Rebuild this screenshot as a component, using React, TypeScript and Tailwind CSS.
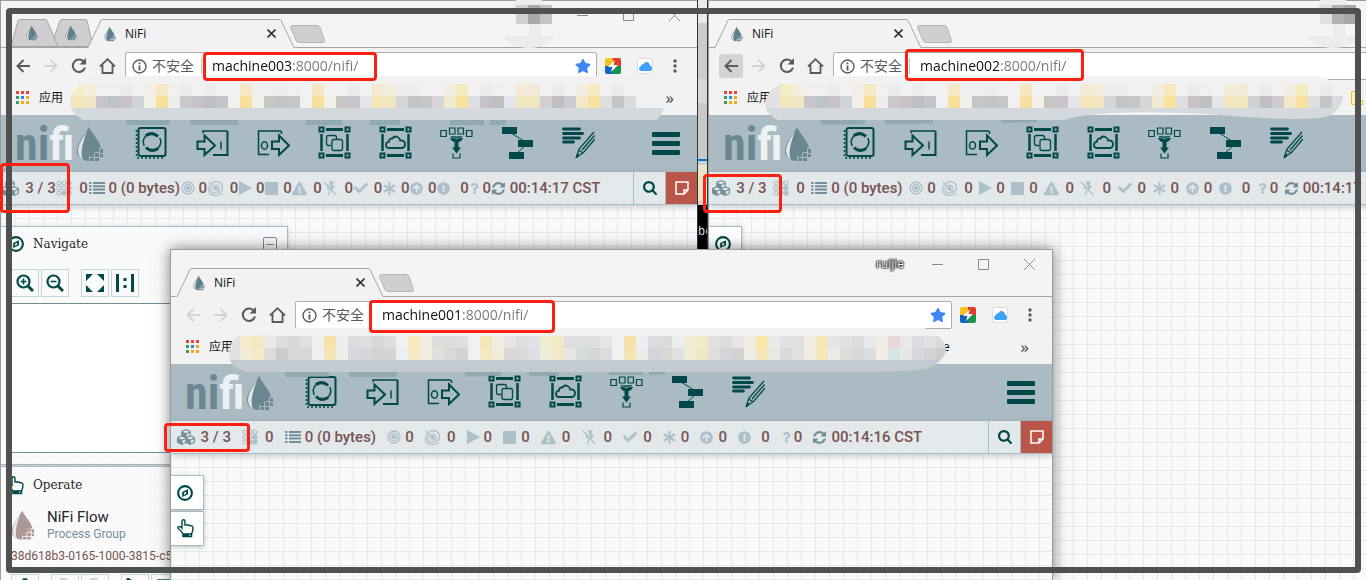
import type { ReactNode } from "react";
import {
  FaArrowCircleUp,
  FaAsterisk,
  FaBolt,
  FaCheck,
  FaCog,
  FaCubes,
  FaExclamationCircle,
  FaExclamationTriangle,
  FaPlay,
  FaQuestion,
  FaStar,
  FaStop,
} from "react-icons/fa";

const SEARCH_PATH =
  "M1216 832q0-185-131.5-316.5t-316.5-131.5-316.5 131.5-131.5 316.5 131.5 316.5 316.5 131.5 316.5-131.5 131.5-316.5zm512 832q0 52-38 90t-90 38q-54 0-90-38l-343-342q-179 124-399 124-143 0-273.5-55.5t-225-150-150-225-55.5-273.5 55.5-273.5 150-225 225-150 273.5-55.5 273.5 55.5 225 150 150 225 55.5 273.5q0 220-124 399l343 343q37 37 37 90z";
const REFRESH_PATH =
  "M1639 1056q0 5-1 7-64 268-268 434.5t-478 166.5q-146 0-282.5-55t-243.5-157l-129 129q-19 19-45 19t-45-19-19-45v-448q0-26 19-45t45-19h448q26 0 45 19t19 45-19 45l-137 137q71 66 161 102t187 36q134 0 250-65t186-179q11-17 53-117 8-23 30-23h192q13 0 22.5 9.5t9.5 22.5zm25-800v448q0 26-19 45t-45 19h-448q-26 0-45-19t-19-45 19-45l138-138q-148-137-349-137-134 0-250 65t-186 179q-11 17-53 117-8 23-30 23h-199q-13 0-22.5-9.5t-9.5-22.5v-7q65-268 270-434.5t480-166.5q146 0 284 55.5t245 156.5l130-129q19-19 45-19t45 19 19 45z";

function Drop({ className }: { className: string }) {
  return (
    <svg viewBox="0 0 28 36" className={className} aria-hidden="true">
      <path
        d="M13 1C10 8 1 17 1 25c0 6 5 10 12 10v-5h3v-3h3v-5h6C24 15 16 8 13 1z"
        fill="currentColor"
      />
      <path d="M11 5C8 11 2 18 2 25c0 4 2 7 5 9C4 27 6 19 11 5z" fill="#fff" opacity="0.8" />
      <path
        d="M19 22h4v4h-4zM24 23h3v4h-3zM14 27h4v4h-4zM19 27h4v4h-4zM24 28h3v3h-3zM14 32h4v3h-4zM19 32h4v3h-4z"
        fill="currentColor"
      />
    </svg>
  );
}

function Compass() {
  return (
    <svg viewBox="0 0 16 16" className="size-4" fill="none" stroke="currentColor" aria-hidden="true">
      <circle cx="8" cy="8" r="6.900" strokeWidth="2.100" />
      <path d="M11 4.200v5L5.200 12V7z" fill="currentColor" stroke="none" />
      <path d="M7 7.800l2.200-1v2L7 9.800z" fill="#f9fafb" stroke="none" />
    </svg>
  );
}

function Hand() {
  return (
    <svg viewBox="0 0 17 19" className="h-[19px] w-[17px]" fill="none" stroke="currentColor" strokeWidth="1.400" aria-hidden="true">
      <path d="M6 15q-1-2.500-4-4.800Q0 8.500 1.500 7.800 3 7 5 9V2.500Q5 .8 6.500.8T8 2.500V6q1.500-.8 2.600.3 1.500-.7 2.500.5Q16 6.500 16 9q0 3-1.500 6" />
      <path d="M5.500 14.500h9.500V18H5.500z" fill="currentColor" strokeWidth="0.500" />
      <path d="M12 16.300h1.500" stroke="#f9fafb" strokeWidth="1" />
    </svg>
  );
}

function Frame() {
  return (
    <g>
      <path d="M1.500 1.500h4v4h-4zM27.500 1.500h4v4h-4zM1.500 27.500h4v4h-4zM27.500 27.500h4v4h-4z" fill="none" strokeWidth="2" />
      <path d="M8 3.500h17M8 29.500h17" strokeWidth="3" />
      <path d="M3.500 8v17M29.500 8v17" strokeWidth="2.500" />
    </g>
  );
}

const TOOLS: { name: string; art: ReactNode }[] = [
  {
    name: "Processor",
    art: (
      <g fill="none">
        <rect x="3.500" y="2" width="27" height="28" rx="2" strokeWidth="2" />
        <path d="M1.500 4v27" strokeDasharray="2 2" strokeWidth="1.500" />
        <path d="M2 32h28" strokeDasharray="2 2" strokeWidth="1.500" />
        <path d="M9.200 20A9 9 0 0 1 20 7.600M24.800 12A9 9 0 0 1 14 24.400" strokeWidth="1.500" />
        <path d="M11 9.500A9 9 0 0 1 23 10.500M23 22.500A9 9 0 0 1 11 21.500" strokeWidth="3" />
      </g>
    ),
  },
  {
    name: "Input port",
    art: (
      <g fill="none">
        <path d="M1.500 15.500h7v-6l10.500 10-10.500 9.500v-6h-7z" strokeWidth="2" />
        <path d="M7 7V5h24.500" strokeWidth="1.500" />
        <path d="M31.500 5v24H17" strokeWidth="2" />
        <path d="M25 15.500v8" strokeWidth="1.500" />
      </g>
    ),
  },
  {
    name: "Output port",
    art: (
      <g fill="none">
        <path d="M15 15.500h7v-6l10 10-10 9.500v-6h-7z" strokeWidth="2" />
        <path d="M24.500 8V6L23 5H1.500v23.500H12" strokeWidth="1.500" />
        <ellipse cx="7.500" cy="19.500" rx="3" ry="3.700" strokeWidth="1.500" />
      </g>
    ),
  },
  {
    name: "Process group",
    art: (
      <g>
        <Frame />
        <path d="M13 19.500h-2.500q-2 0-2-2v-6q0-2 2-2h6q2 0 2 2V13" fill="none" strokeWidth="1.300" />
        <rect x="14" y="13.500" width="10.500" height="11" rx="2" fill="none" strokeWidth="1.300" />
      </g>
    ),
  },
  {
    name: "Remote process group",
    art: (
      <g>
        <Frame />
        <path
          d="M10.500 22q-3.500 0-3.500-3t3-3.300q0-3.500 3.400-3.200 2-3 5-1.500 2.500 1 2.800 3.500 4.800-.5 4.800 3.700 0 3.800-4 3.800z"
          fill="none"
          strokeWidth="1.800"
        />
      </g>
    ),
  },
  {
    name: "Funnel",
    art: (
      <g fill="none">
        <path d="M.8 4.500h5.500v6H.8zM9.500 2h5.500v6H9.500zM18 2h5.500v6H18zM26.500 4.500H32v6h-5.500z" strokeWidth="1.200" />
        <path d="M11 10.500q5.500 2 11 0M10.500 12q6 2.500 12 0l-2 3q-4 1.500-8 0z" fill="currentColor" strokeWidth="1" />
        <path d="M16.500 14v8" strokeWidth="4" />
        <path d="M12 21.500h9l-4.500 6z" fill="currentColor" stroke="none" />
        <path d="M13 27.500v4.500h7v-4.500" strokeWidth="1.200" />
      </g>
    ),
  },
  {
    name: "Template",
    art: (
      <g>
        <path d="M1 1h15v7H1zM17 14h15v7H17zM8 26h15v7H8z" fill="currentColor" stroke="none" />
        <path d="M10 7l13 8M24 20l-8 7" strokeWidth="1" />
      </g>
    ),
  },
  {
    name: "Label",
    art: (
      <g fill="none">
        <path d="M1.500 3h16M1.500 7.500h19M1.500 12h16M1.500 16h10" strokeWidth="2.800" strokeLinecap="round" />
        <path d="M32 6L17 23l-2.500 8 7-4.500L33 13M20 24L32.500 9.500M16.500 24l4 2.500" strokeWidth="1.300" />
        <path d="M14 32l1.200-4 2.300 1.500z" fill="currentColor" />
      </g>
    ),
  },
];

function StatusIcon({ kind }: { kind: string }) {
  switch (kind) {
    case "cubes":
      return <FaCubes size={18} className="text-[#728e9b]" />;
    case "threads":
      return (
        <svg viewBox="0 0 16 16" className="size-4" fill="none" stroke="currentColor" strokeWidth="1.200">
          <circle cx="3" cy="3" r="2" /><circle cx="8" cy="3" r="2" /><circle cx="13" cy="3" r="2" />
          <circle cx="3" cy="8" r="2" /><circle cx="8" cy="8" r="2" /><circle cx="13" cy="8" r="2" fill="currentColor" />
          <circle cx="3" cy="13" r="2" /><circle cx="8" cy="13" r="2" fill="currentColor" /><circle cx="13" cy="13" r="2" fill="currentColor" />
        </svg>
      );
    case "list":
      return (
        <svg viewBox="0 0 16 12" className="h-3 w-4 text-[#728e9b]" stroke="currentColor" strokeWidth="2">
          <path d="M0 1h2.500M0 4.300h2.500M0 7.600h2.500M0 11h2.500M4 1h12M4 4.300h12M4 7.600h12M4 11h12" />
        </svg>
      );
    case "transmitting":
      return (
        <svg viewBox="0 0 14 14" className="size-3.5" fill="none" stroke="currentColor" strokeWidth="1.300">
          <circle cx="7" cy="7" r="6" /><circle cx="7" cy="7" r="3.700" /><circle cx="7" cy="7" r="1.700" fill="currentColor" />
        </svg>
      );
    case "not-transmitting":
      return (
        <svg viewBox="0 0 15 15" className="size-[15px]" fill="none" stroke="currentColor" strokeWidth="1.300">
          <path d="M4 2.500a6 6 0 0 1 9 8M11 13a6 6 0 0 1-8.500-9M6 5a3.500 3.500 0 0 1 5 4.500M9 11a3.500 3.500 0 0 1-5-5" />
          <circle cx="7.500" cy="7.500" r="1.500" fill="currentColor" />
          <path d="M1 1l13 13" />
        </svg>
      );
    case "running":
      return (
        <svg viewBox="0 0 13 14" className="h-3.5 w-[13px]" fill="currentColor"><path d="M0 0l13 7-13 7z" /></svg>
      );
    case "stopped":
      return <svg viewBox="0 0 13 13" className="size-[13px]" fill="currentColor"><path d="M0 0h13v13H0z" /></svg>;
    case "invalid":
      return <FaExclamationTriangle size={15} />;
    case "disabled":
      return (
        <svg viewBox="0 0 14 15" className="h-[15px] w-3.5" fill="currentColor" stroke="currentColor">
          <path d="M6 .5h4.500L9 5h3L8.500 9M5 3l-.8 5H7L5 14.500l2.500-4" strokeWidth="0.500" />
          <path d="M1 1l12 13" strokeWidth="1.300" />
        </svg>
      );
    case "up-to-date":
      return <FaCheck size={14} />;
    case "modified":
      return <FaAsterisk size={13} />;
    case "stale":
      return <FaArrowCircleUp size={13} />;
    case "modified-stale":
      return <FaExclamationCircle size={13} />;
    case "sync-failure":
      return <FaQuestion size={11} />;
    default:
      return (
        <svg viewBox="128 128 1536 1536" className="size-[13px] text-[#728e9b]" fill="currentColor"><path d={REFRESH_PATH} /></svg>
      );
  }
}

const STATUS: { kind: string; slot: string; text?: string }[] = [
  { kind: "cubes", slot: "w-6", text: "3 / 3" },
  { kind: "threads", slot: "w-[23px]" },
  { kind: "list", slot: "w-5", text: "0 (0 bytes)" },
  { kind: "transmitting", slot: "w-[18px]" },
  { kind: "not-transmitting", slot: "w-[22px]" },
  { kind: "running", slot: "w-[17px]" },
  { kind: "stopped", slot: "w-[18px]" },
  { kind: "invalid", slot: "w-[21px]" },
  { kind: "disabled", slot: "w-[22px]" },
  { kind: "up-to-date", slot: "w-5" },
  { kind: "modified", slot: "w-[18px]" },
  { kind: "stale", slot: "w-[18px]" },
  { kind: "modified-stale", slot: "w-[23px]" },
  { kind: "sync-failure", slot: "w-[13px]" },
  { kind: "refresh", slot: "w-[18px]" },
];

function Favicon() {
  return <Drop className="h-4 w-3 text-[#5f7f8e]" />;
}

function Tabs({ background }: { background: boolean }) {
  return (
    <div className="flex items-end self-end">
      {background ? (
        <div className="relative ml-[10px] h-7 w-[77px]">
          <svg viewBox="0 0 82 28" className="absolute top-0 left-0 h-7 w-[82px]" fill="#cfcfcf" stroke="#a5a5a5">
            <path d="M40 27.500L49 1.500q.500-1 2-1h23q1.500 0 2 1l6 26z" />
            <path d="M0 27.500L7 1.500q.500-1 2-1h25q1.500 0 2 1L47 27.500z" />
          </svg>
          <div className="relative flex h-7 items-center gap-[27px] pl-[15px]">
            <Favicon />
            <Favicon />
          </div>
        </div>
      ) : (
        <div className="w-[6px]" />
      )}
      <div className="relative -mb-px flex h-[29px] w-[206px] items-center">
        <svg viewBox="0 0 206 29" className="absolute inset-0 h-full w-full">
          <path d="M0 28.500L13 1.500q.500-1 2-1h176q1.500 0 2 1L206 28.500V29H0z" fill="#f2f2f2" />
          <path d="M0 28.500L13 1.500q.500-1 2-1h176q1.500 0 2 1L206 28.500" fill="none" stroke="#a5a5a5" />
        </svg>
        <a href="#nifi" className="relative flex flex-1 items-center gap-[9px] pl-[16px] text-[12px] text-[#111]">
          <Favicon />
          NiFi
        </a>
        <button aria-label="Close tab" className="relative mr-[18px]">
          <svg viewBox="0 0 9 9" className="size-[9px]" stroke="#333" strokeWidth="1.600"><path d="M.5.5l8 8M8.500.5l-8 8" /></svg>
        </button>
      </div>
      <button aria-label="New tab" className="mb-1 -ml-1">
        <svg viewBox="0 0 35 18" className="h-[18px] w-[35px]">
          <path d="M3 .5h24q2 0 3 2l4.500 13q0 2-1.500 2H9q-2 0-3-2L.5 2.500Q.500.500 3 .5z" fill="#cfcfcf" stroke="#b4b4b4" />
        </svg>
      </button>
    </div>
  );
}

function Controls({ user }: { user?: string }) {
  return (
    <div className="ml-auto flex h-7 items-center">
      {user && (
        <span className="mr-[10px] text-[12px] text-white [text-shadow:0_0_1px_#000,0_0_1px_#000,0_0_2px_#000,0_0_2px_#000]">
          {user}
        </span>
      )}
      <button aria-label="Minimize" className="flex w-[46px] justify-center">
        <svg viewBox="0 0 11 11" className="size-[11px]" stroke="#8a8a8a"><path d="M0 5.500h11" /></svg>
      </button>
      <button aria-label="Maximize" className="flex w-[46px] justify-center">
        <svg viewBox="0 0 11 11" className="size-[11px]" stroke="#8a8a8a" fill="none"><path d="M.5.5h10v10H.5z" /></svg>
      </button>
      <button aria-label="Close" className="flex w-[46px] justify-center">
        <svg viewBox="0 0 11 11" className="size-[11px]" stroke="#8a8a8a"><path d="M0 0l11 11M11 0L0 11" /></svg>
      </button>
    </div>
  );
}

function NavArrow({ label, flip, tone }: { label: string; flip?: boolean; tone: string }) {
  return (
    <button aria-label={label} className={`flex h-6 w-6 items-center justify-center rounded-xs ${tone}`}>
      <svg viewBox="0 0 14 14" className={flip ? "size-3.5 rotate-180" : "size-3.5"} fill="none" stroke="currentColor" strokeWidth="1.900">
        <path d="M14 7H1.500M7.500 1L1.500 7l6 6" />
      </svg>
    </button>
  );
}

const APP_DOTS = ["#e8443a", "#e8443a", "#e8443a", "#34a05a", "#2f86f0", "#f4ab10", "#34a05a", "#f4ab10", "#f4ab10"];

interface WindowProps {
  host: string;
  clock: string;
  user?: string;
  background?: boolean;
  backTone: string;
  spread: string;
  extraBookmark?: ReactNode;
  children?: ReactNode;
}

function BrowserWindow({ host, clock, user, background = false, backTone, spread, extraBookmark, children }: WindowProps) {
  const fieldId = `address-${host}`;
  return (
    <section className="flex h-full flex-col overflow-hidden border-t border-l border-[#9c9c9c] bg-[#f4f4f4]">
      <div className="flex h-[47px] shrink-0 border-b border-[#a5a5a5]">
        <Tabs background={background} />
        <Controls user={user} />
      </div>

      <div className="flex h-9 shrink-0 items-center bg-[#f2f2f2] pl-2.5 text-[#5a5a5a]">
        <div className="flex gap-1">
          <NavArrow label="Back" tone={backTone} />
          <NavArrow label="Forward" flip tone="text-[#d3d3d3]" />
          <button aria-label="Reload" className="flex size-6 items-center justify-center">
            <svg viewBox="0 0 16 16" className="size-4" fill="none" stroke="currentColor" strokeWidth="2">
              <path d="M13.300 4.500A6.200 6.200 0 1 0 14 9.500" />
              <path d="M15 0v6.500H8.500z" fill="currentColor" stroke="none" />
            </svg>
          </button>
          <button aria-label="Home" className="flex size-6 items-center justify-center">
            <svg viewBox="0 0 17 16" className="h-4 w-[17px]" fill="none" stroke="currentColor" strokeWidth="1.800">
              <path d="M1 8.500L8.500 1.200 16 8.500M3.500 7v8h10V7" />
            </svg>
          </button>
        </div>
        <div className="ml-1.5 flex h-7 flex-1 items-center rounded-xs border border-[#adadad] bg-white pl-1.5">
          <svg viewBox="0 0 15 15" className="size-[15px]" fill="none" stroke="currentColor" strokeWidth="1.400">
            <circle cx="7.500" cy="7.500" r="6.500" />
            <path d="M7.500 6.500v5M7.500 3.500v1.700" strokeWidth="1.800" />
          </svg>
          <label htmlFor={fieldId} className="ml-[5px] w-[50px] border-r border-[#c4c4c4] text-[14px] leading-4 whitespace-nowrap">
            不安全
          </label>
          <input
            id={fieldId}
            defaultValue={`${host}:8000/nifi/`}
            className="ml-2.5 min-w-0 flex-1 bg-[linear-gradient(90deg,#111_80px,#777_80px)] bg-clip-text text-[14px] leading-5 text-transparent outline-none"
          />
          <button aria-label="Bookmark this page" className="mr-[5px] text-[#4285f4]">
            <FaStar size={16} />
          </button>
        </div>
        <div className="mr-4 ml-2 flex items-center gap-4">
          <button aria-label="Proxy extension">
            <svg viewBox="0 0 16 16" className="size-4">
              <path d="M0 2q0-2 2-2h6v8H0z" fill="#f6c31c" />
              <path d="M8 0h6q2 0 2 2v6H8z" fill="#df3b2e" />
              <path d="M0 8h8v8H2q-2 0-2-2z" fill="#1565c0" />
              <path d="M8 8h8v6q0 2-2 2H8z" fill="#179447" />
              <path d="M10 2L3 9h4.500L6 14l7-7H8.500z" fill="#fff" />
            </svg>
          </button>
          <button aria-label="Cloud extension" className="flex size-4 items-center justify-center rounded-xs border border-[#dcdcdc] bg-white">
            <svg viewBox="0 0 13 9" className="h-[9px] w-[13px]">
              <path d="M3 9Q0 9 0 6.500 0 4.500 2 4q.3-2 2.500-2Q5.500 0 7.500 0q3 0 3.500 3.500 2 .5 2 2.700Q13 9 10.500 9z" fill="#3d9ff5" />
            </svg>
          </button>
          <button aria-label="Menu" className="flex w-3 justify-center">
            <svg viewBox="0 0 4 14" className="h-3.5 w-1" fill="currentColor">
              <circle cx="2" cy="2" r="1.700" /><circle cx="2" cy="7" r="1.700" /><circle cx="2" cy="12" r="1.700" />
            </svg>
          </button>
        </div>
      </div>

      <div className="flex h-[31px] shrink-0 items-center bg-[#f2f2f2] pb-1 pl-[15px] text-[12px] text-[#111]">
        <svg viewBox="0 0 13 13" className="size-[13px]">
          {APP_DOTS.map((fill, i) => (
            <rect key={i} x={(i % 3) * 5} y={Math.floor(i / 3) * 5} width="3" height="3" fill={fill} />
          ))}
        </svg>
        <a href="#apps" className="ml-2.5">应用</a>
        {extraBookmark}
        <button aria-label="More bookmarks" className="mr-[23px] ml-auto text-[17px] leading-4 text-[#444]">»</button>
      </div>

      <header className="flex h-[57px] shrink-0 items-center bg-[#aabbc3] text-[#004849]">
        <div className="flex w-[120px] shrink-0 items-center pl-[14px]">
          <span className="w-[61px] font-['Liberation_Sans_Narrow','Roboto_Condensed',Roboto,sans-serif] text-[46px] leading-[48px] font-bold text-[#6b8791]">
            ni<span className="text-[#ecf1f4]">fi</span>
          </span>
          <Drop className="h-9 w-7 text-[#6b8791]" />
        </div>
        {TOOLS.map((tool) => (
          <button key={tool.name} aria-label={tool.name} className="flex w-[61px] shrink-0 justify-center pb-0.5">
            <svg viewBox="0 0 33 34" className="h-[34px] w-[33px]" stroke="currentColor" color="#004849">{tool.art}</svg>
          </button>
        ))}
        <button aria-label="Global menu" className="mr-[17px] ml-auto flex w-7 flex-col gap-1">
          <span className="h-[5px] rounded-[1px] bg-[#004849]" />
          <span className="h-[5px] rounded-[1px] bg-[#004849]" />
          <span className="h-[5px] rounded-[1px] bg-[#004849]" />
        </button>
      </header>

      <div className="relative flex h-[33px] shrink-0 justify-between border-b border-[#aabbc3] bg-[#e3e8eb] shadow-[0_2px_6px_rgba(0,0,0,0.2)]">
        <div className={`flex shrink-0 items-center justify-around font-[Roboto,sans-serif] text-[15px] font-medium whitespace-nowrap text-[#775351] ${spread}`}>
          {STATUS.map(({ kind, slot, text }) => (
            <div key={kind} className="flex items-center">
              <span className={`flex text-[#adc0c9] ${slot}`}>
                <StatusIcon kind={kind} />
              </span>
              {kind === "refresh" ? clock : (text ?? "0")}
            </div>
          ))}
        </div>
        <div className="flex">
          <button aria-label="Search" className="flex w-8 items-center justify-center border-l border-[#aabbc3] text-[#004849]">
            <svg viewBox="64 128 1664 1664" className="size-3.5" fill="currentColor"><path d={SEARCH_PATH} /></svg>
          </button>
          <button aria-label="Bulletins" className="flex w-8 items-center justify-center border-l border-[#aabbc3] bg-[#ba554a]">
            <svg viewBox="0 0 14 14" className="size-3.5" fill="none" stroke="#fff" strokeWidth="1.500">
              <path d="M1 1h12v8l-4 4H1zM13 9H9v4" />
            </svg>
          </button>
        </div>
      </div>

      <main className="flex-1 overflow-hidden bg-[#f9fafb] bg-[linear-gradient(#e4e9eb_1px,transparent_1px),linear-gradient(90deg,#e4e9eb_1px,transparent_1px)] bg-[size:14px_14px] bg-[position:0_-1px] pt-[21px]">
        {children}
      </main>
    </section>
  );
}

function SideButton({ label, children }: { label: string; children: ReactNode }) {
  return (
    <button
      aria-label={label}
      className="flex h-[35px] w-[33px] items-center border border-l-0 border-[#aabbc3] bg-white/90 pl-1.5 text-[#004849] shadow-[0_1px_4px_rgba(0,0,0,0.25)]"
    >
      {children}
    </button>
  );
}

function SideButtons() {
  return (
    <div className="flex flex-col gap-px">
      <SideButton label="Navigate"><Compass /></SideButton>
      <SideButton label="Operate"><Hand /></SideButton>
    </div>
  );
}

function PanelButton({ label, children }: { label: string; children: ReactNode }) {
  return (
    <button aria-label={label} className="flex size-7 items-center justify-center border border-[#c8d5d7] text-[#004849]">
      {children}
    </button>
  );
}

function Zoom({ plus }: { plus?: boolean }) {
  return (
    <svg viewBox="0 0 18 18" className="size-[18px]" fill="none" stroke="currentColor">
      <circle cx="7.500" cy="7.500" r="6" strokeWidth="2.200" />
      <path d="M12 12l5 5" strokeWidth="3" />
      <path d={plus ? "M4.500 7.500h6M7.500 4.500v6" : "M4.500 7.500h6"} strokeWidth="1.600" />
    </svg>
  );
}

function Panels() {
  const heading = "font-['DejaVu_Serif',serif] text-[12px] text-[#262626]";
  const panel = "w-[287px] border border-l-0 border-[#aabbc3] bg-[#f9fafb]/90 shadow-[0_1px_5px_rgba(0,0,0,0.2)]";
  return (
    <div className="flex flex-col gap-px">
      <section className={`${panel} h-[239px]`}>
        <div className="flex h-[34px] items-center pr-2.5 pl-[7px] text-[#004849]">
          <Compass />
          <h2 className={`ml-[9px] flex-1 ${heading}`}>Navigate</h2>
          <button aria-label="Collapse" className="flex size-3.5 items-center justify-center rounded-xs border border-[#728e9b]">
            <span className="h-px w-2 bg-[#728e9b]" />
          </button>
        </div>
        <div className="mt-2 ml-2.5 flex gap-0.5">
          <PanelButton label="Zoom in"><Zoom plus /></PanelButton>
          <PanelButton label="Zoom out"><Zoom /></PanelButton>
          <span className="w-2" />
          <PanelButton label="Fit">
            <svg viewBox="0 0 18 18" className="size-[18px]" fill="currentColor">
              <path d="M0 0h7L0 7zM18 0v7l-7-7zM0 18v-7l7 7zM18 18h-7l7-7z" />
            </svg>
          </PanelButton>
          <PanelButton label="Actual size">
            <svg viewBox="0 0 18 18" className="size-[18px]" fill="currentColor">
              <path d="M0 0h3v18H0zM15 0h3v18h-3zM7.500 4h3v3h-3zM7.500 11h3v3h-3z" />
            </svg>
          </PanelButton>
        </div>
        <div className="mt-1.5 mr-2.5 ml-2.5 h-[150px] border border-[#728e9b] bg-white" />
      </section>
      <section className={`${panel} h-[140px]`}>
        <div className="flex h-9 items-center pl-1.5 text-[#004849]">
          <Hand />
          <h2 className={`ml-[9px] ${heading}`}>Operate</h2>
        </div>
        <div className="flex items-center gap-3 pt-[5px] pl-2.5">
          <Drop className="h-[34px] w-6 text-[#ad9897]" />
          <div className="font-[Roboto,sans-serif]">
            <div className="text-[15px] leading-[18px] text-[#262626]">NiFi Flow</div>
            <div className="text-[12px] leading-4 text-[#728e9b]">Process Group</div>
          </div>
        </div>
        <div className="mt-1.5 pl-2.5 font-[Roboto,sans-serif] text-[12px] leading-4 text-[#775351]">
          38d618b3-0165-1000-3815-c5
        </div>
        <div className="mt-2.5 ml-2.5 flex gap-0.5">
          <PanelButton label="Configure"><FaCog size={20} /></PanelButton>
          <span className="w-2" />
          <PanelButton label="Enable"><FaBolt size={20} color="#cdd7da" /></PanelButton>
          <PanelButton label="Disable"><FaBolt size={20} color="#cdd7da" /></PanelButton>
          <span className="w-2" />
          <PanelButton label="Start"><FaPlay size={20} /></PanelButton>
          <PanelButton label="Stop"><FaStop size={20} /></PanelButton>
        </div>
      </section>
    </div>
  );
}

const UPPER_A =
  "f3ecc4 f3efdc f0f0f0 f0f0f0 ebebed f1f1f1 f3efe6 f5e7c4 f1f0ee ebebeb f1f1f1 ececec f1f1f1 f1f1f1 f6e7c4 efefef efefef ecedec f0f0f0 f1f1f1 f5e6bf f1f1ef f1f1f1 ebebec f1f1f1 f3ead3 f3ecd8 ececee ecefee f1f1f1 f1f1f1 f1ede0 f5e8bd f1f1f1 ebebec f0f0f0 f1f1f1 f3ebd5 f2ead6 f1f1f1 ebebec f1f1f1 f1eee0 f5e9c0 f1f1f1 ebebec f1f1f1 f1f1f1 f1f1f1 f1f1f1".split(" ");
const LOWER_A =
  "f5e6bb efe6c4 c9c3cb bdc4c6 c9c2c8 cfd3d5 f1efe8 f7e09a efeeea cbc7ca c7c2c8 c0bdc4 c7c4c9 f1f1f1 f7e09a f0efea c6c6c4 c1c3c5 c6c6c6 f0f0f0 f7e09f f1efe8 c8c6c4 c9c3cb e2e6e8 f4e6b8 f2e6c0 d6d6d8 c1c4c3 c6c6c5 d6d6d7 f0ead0 f9e29c dedddf c6c1c6 c0c0c0 e4e6ea f2e6c0 f2e6bf d0cfd4 c2bdc1 ccccd2 f2e8c8 f8e2a0 dfdfdd c5c4c3 dadadf f1f1f1 f1f1f1 f1f1f1".split(" ");
const UPPER_C =
  "f3ebcc f2e9c4 e9e9e9 dcdedd dad6dc e0e0e2 efefef f5e3a8 eeeeee dddbde dfdfdf d8d6d8 dddddd eff1f2 f5e8ba f0ecdf dedddd dcdedd dfdfdf f0f0f0 f5e8b8 f1ece0 e5e5e5 dfdede e2e1e6 f1ebd0 f2e8c4 e0dcdf dedfdd dcdfde e3e5e7 f1f1f1 f5e2a8 eeeeee dddce0 dbdbdb ebecee f1ecd8 f3e9c4 e3dfde dcdcde e6e6e7 f0ede4 f8e6ab e9e9e8 e0e1e2 e0e0e3 f2ede0 f6e7b6 e4e3e5 e1e1e2 dddddf e6e8eb f0ede4 e8d6db e8e8e6 dddce0 e1e1de dbd9de".split(" ");
const LOWER_C =
  "f3ead8 f3e9c6 dcdcdc cccacb dad7dc d7d7d5 efefef f4e5b6 efeeea d8d6da d8d5da d4d1d4 d5d3d5 ecf0f3 f3e8c4 f1eddd dfdfdb d8dad8 d2d4d3 f0f0f0 f3e8c0 f0ecd8 d9d7d8 dadada dfdee3 eeecda f2e7c6 e8e5e3 d5dbd8 d6d7d2 dbdcdf f1f1f1 f4e4b4 ecebe8 d6d4db d8d7d6 e0e0e1 efebd6 f2e7c5 dedede d5d4da d3d1d2 efede6 f5e6b8 e8e8e4 d9dad9 e0e0e1 f0ede0 f5e7bb ebe9ec dcddd7 d8d6d8 dbdee0 efede6 d3e6e1 e6e6e4 d8d7dd d5d2d2 cfcbd0".split(" ");

interface MosaicProps {
  id: string;
  width: number;
  lead: number;
  upper: string[];
  lower: string[];
  base: string;
  outline: string;
}

function Mosaic({ id, width, lead, upper, lower, base, outline }: MosaicProps) {
  return (
    <svg width={width} height="50" aria-hidden="true">
      <clipPath id={id}>
        <path d={outline} />
      </clipPath>
      <g clipPath={`url(#${id})`}>
        <rect width={width} height="9" fill="#f1f1f1" />
        <rect y="8" width={lead} height="24" fill="#e2e2e4" />
        {upper.map((c, i) => (
          <rect key={i} x={lead + i * 12} y="8" width="12" height="12" fill={`#${c}`} />
        ))}
        {lower.map((c, i) => (
          <rect key={i} x={lead + i * 12} y="20" width="12" height="12" fill={`#${c}`} />
        ))}
        <rect y="32" width={width} height="12" fill={base} />
        <path d="M56 44h44v5H56zM120 44h48v5h-48zM236 44h36v5h-36zM300 44h30v5h-30zM380 44h34v5h-34zM420 44h16v5h-16z" fill="#86a1a9" opacity="0.7" />
      </g>
    </svg>
  );
}

function NameSmear({ tones }: { tones: string[] }) {
  return (
    <svg width="52" height="48" aria-hidden="true">
      <path d="M13 0h26l4 8H9zM0 36h52q-8 12-26 12T0 36zM26 24h12v12H26z" fill="#ececec" />
      {tones.map((tone, i) => (
        <rect key={i} x={13 + i * 12} y="5" width="12" height="19" fill={tone} />
      ))}
    </svg>
  );
}

export default function App() {
  const mark = "pointer-events-none absolute rounded-[4px] border-3 border-[#fb2012]";
  return (
    <div className="relative h-screen overflow-hidden bg-white font-['Open_Sans','Noto_Sans_CJK_SC',sans-serif]">
      <div className="flex h-full">
        <div className="w-[697px] shrink-0">
          <BrowserWindow host="machine003" clock="00:14:17 CST" background backTone="text-[#5a5a5a]" spread="w-[600px]">
            <Panels />
          </BrowserWindow>
        </div>
        <div className="flex w-[11px] shrink-0 flex-col border-x border-[#333] bg-black">
          <div className="h-[23px] bg-[#e9e9e9]" />
          <div className="h-14 bg-[#cbcbcb]" />
          <div className="h-6 bg-[#d8d8d8]" />
          <div className="h-14 bg-[#c8c8c8]" />
          <div className="h-0.5 bg-[#0078d7]" />
          <div className="h-1 bg-[#cfcfcf]" />
          <div className="h-9 bg-[#e6e6c8]" />
          <div className="h-1 bg-[#cfcfcf]" />
          <div className="mt-5 w-full overflow-hidden font-['Liberation_Mono',monospace] text-[12px] leading-3.5 text-[#ddd]">be</div>
        </div>
        <div className="-mr-[135px] flex-1">
          <BrowserWindow
            host="machine002"
            clock="00:14:17 CST"
            backTone="bg-[#d3d3d3] text-[#5a5a5a]"
            spread="w-[688px]"
            extraBookmark={
              <svg viewBox="0 0 12 14" className="ml-[580px] h-3.5 w-3" fill="#fff0b0" stroke="#e8c030"><path d="M.5.500h8v9h3v4H.5z" /></svg>
            }
          >
            <SideButtons />
          </BrowserWindow>
        </div>
      </div>

      <div className="pointer-events-none absolute top-0 left-[503px]"><NameSmear tones={["#d0d0d0", "#a9a9a9", "#c3c3c3"]} /></div>
      <div className="pointer-events-none absolute top-0 left-[1307px]"><NameSmear tones={["#e0e0e0", "#b2b2b2", "#a8a8a8"]} /></div>
      <div className="pointer-events-none absolute top-[76px] left-[70px]">
        <Mosaic id="smear-left" width={596} lead={2} upper={UPPER_A} lower={LOWER_A} base="#d3d9dc" outline="M14 8V0h556q26 6 26 24-2 12-9 20H440v5H30Q0 44 0 24 4 10 14 8z" />
      </div>
      <div className="pointer-events-none absolute top-[76px] left-[765px]">
        <Mosaic id="smear-right" width={578} lead={15} upper={UPPER_A} lower={LOWER_A} base="#d3d9dc" outline="M22 6L60 0h493q25 6 25 22-4 18-24 20-40 3-110-4-120-6-150 8l-260 3Q0 46 0 26 4 10 22 6z" />
      </div>

      <div className="absolute top-[249px] bottom-0 left-[170px] w-[883px] border-r border-[#9c9c9c] shadow-[0_0_14px_rgba(0,0,0,0.5)]">
        <BrowserWindow
          host="machine001"
          clock="00:14:16 CST"
          user="ruijie"
          backTone="text-[#d3d3d3]"
          spread="w-[757px]"
          extraBookmark={<span className="ml-[710px]">e</span>}
        >
          <SideButtons />
        </BrowserWindow>
      </div>
      <div className="pointer-events-none absolute top-[328px] left-[229px]">
        <Mosaic id="smear-front" width={718} lead={11} upper={UPPER_C} lower={LOWER_C} base="#c3cbd1" outline="M8 8L60 0h635q22 8 22 24-8 16-26 18l-60 3-480 4H50Q0 46 0 28 0 14 8 8z" />
      </div>

      <div className="pointer-events-none absolute top-2 right-[5px] bottom-[7px] left-1.5 rounded-[4px] border-[6px] border-[#505050]" />

      <div className={`${mark} top-[52px] left-[203px] h-[29px] w-[174px]`} />
      <div className={`${mark} top-[49px] left-[905px] h-8 w-[179px]`} />
      <div className={`${mark} top-[300px] left-[369px] h-[33px] w-[186px]`} />
      <div className={`${mark} top-[163px] left-0 h-[50px] w-[70px]`} />
      <div className={`${mark} top-[174px] left-[703px] h-[39px] w-[79px]`} />
      <div className={`${mark} top-[423px] left-[164px] h-[29px] w-[86px]`} />
    </div>
  );
}
